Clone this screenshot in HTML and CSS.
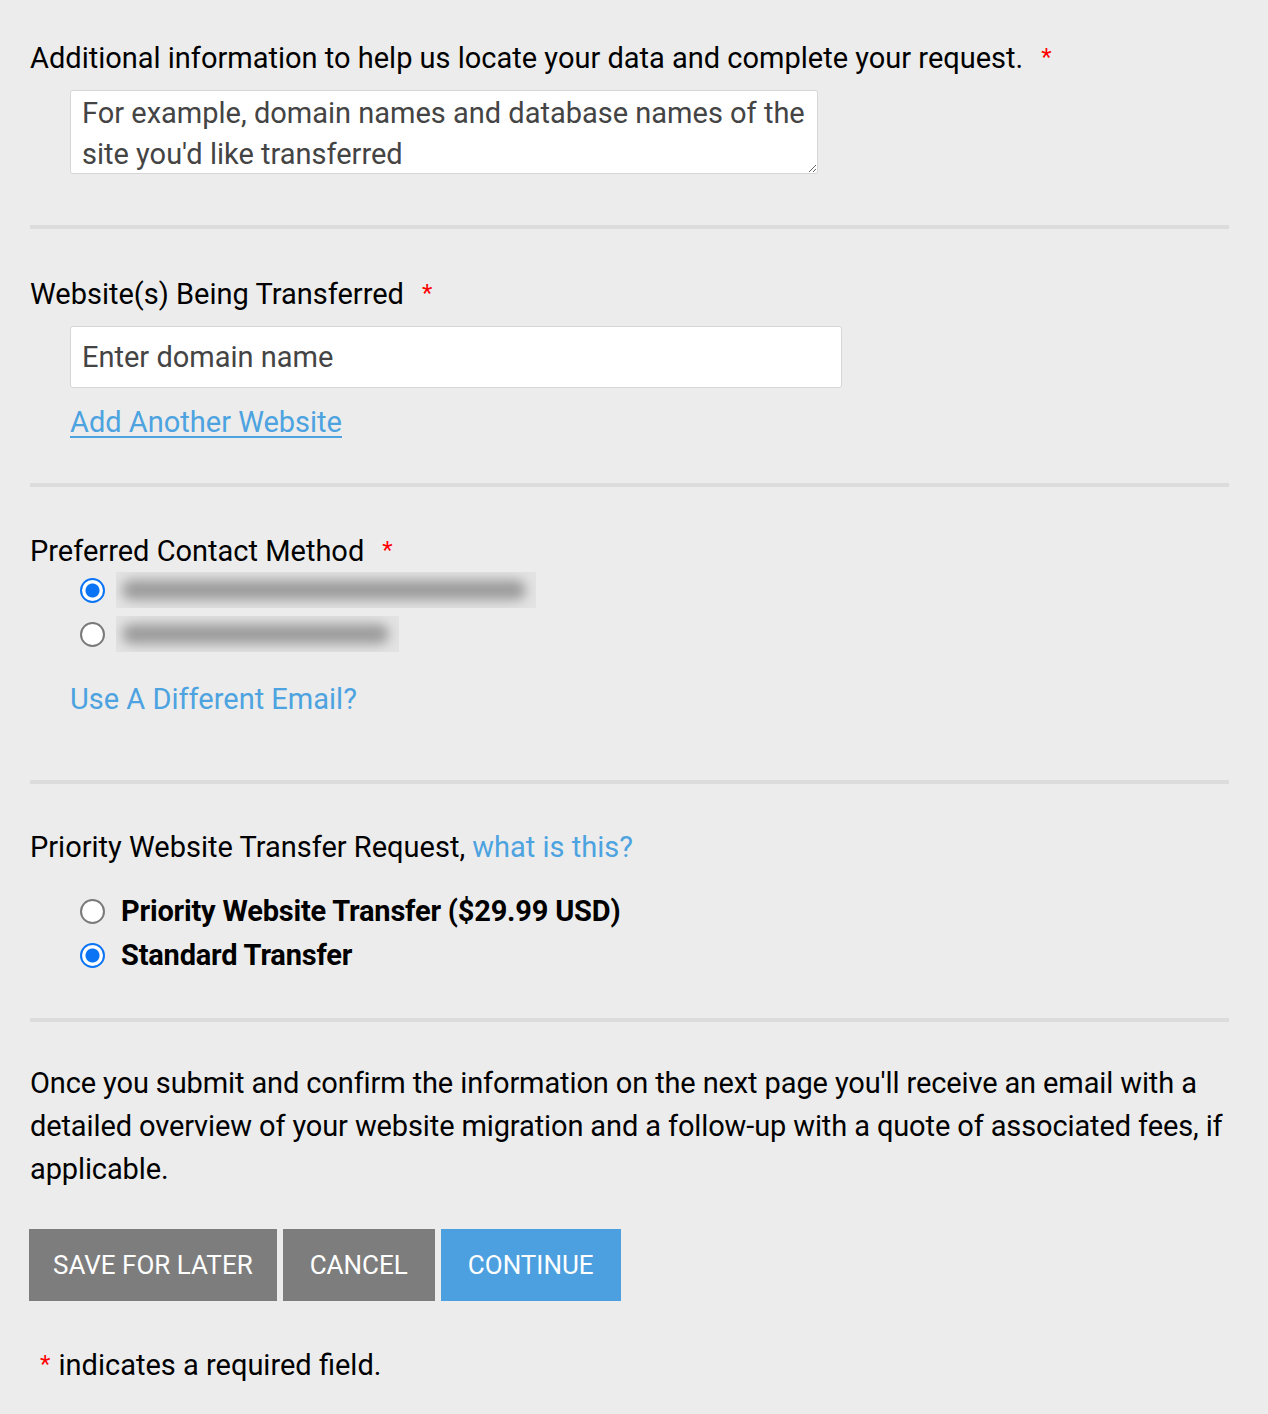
FILE: index.html
```html
<!DOCTYPE html>
<html lang="en">
<head>
<meta charset="utf-8">
<title>Website Transfer Request</title>
<link rel="stylesheet" href="styles.css">
</head>
<body>
<form class="form">
  <section class="section s1">
    <div class="label">Additional information to help us locate your data and complete your request.<span class="req">*</span></div>
    <div class="indent">
      <textarea class="textarea" placeholder="For example, domain names and database names of the site you'd like transferred"></textarea>
    </div>
  </section>

  <section class="section s2">
    <div class="label">Website(s) Being Transferred<span class="req">*</span></div>
    <div class="indent">
      <input class="input" type="text" placeholder="Enter domain name">
      <a class="link underline" href="#">Add Another Website</a>
    </div>
  </section>

  <section class="section s3">
    <div class="label">Preferred Contact Method<span class="req">*</span></div>
    <div class="options contact">
      <label class="option"><input class="radio" type="radio" name="contact" checked><span class="blurbox w1"><span class="blob"></span></span></label>
      <label class="option"><input class="radio" type="radio" name="contact"><span class="blurbox w2"><span class="blob"></span></span></label>
    </div>
    <div class="indent">
      <a class="link" href="#">Use A Different Email?</a>
    </div>
  </section>

  <section class="section s4">
    <div class="label">Priority Website Transfer Request, <a class="link" href="#">what is this?</a></div>
    <div class="options priority">
      <label class="option"><input class="radio" type="radio" name="priority"><span class="opt-text">Priority Website Transfer ($29.99 USD)</span></label>
      <label class="option"><input class="radio" type="radio" name="priority" checked><span class="opt-text">Standard Transfer</span></label>
    </div>
  </section>

  <section class="final">
    <p class="note">Once you submit and confirm the information on the next page you'll receive an email with a detailed overview of your website migration and a follow-up with a quote of associated fees, if applicable.</p>
    <div class="buttons">
      <button type="button" class="btn gray">SAVE FOR LATER</button>
      <button type="button" class="btn gray wide">CANCEL</button>
      <button type="button" class="btn blue wide">CONTINUE</button>
    </div>
    <p class="required-note"><span class="req-small">*</span> indicates a required field.</p>
  </section>
</form>
</body>
</html>
```

FILE: styles.css
```css
html, body {
  margin: 0;
  padding: 0;
  background: #ececec;
}
body {
  font-family: Roboto, "Liberation Sans", sans-serif;
  font-size: 29px;
  color: #000;
  -webkit-font-smoothing: antialiased;
}
.form {
  width: 1199px;
  padding: 38px 0 0 30px;
}
.section {
  border-bottom: 4px solid #dcdcdc;
}
.label {
  line-height: 40px;
  height: 40px;
  white-space: nowrap;
}
.req {
  display: inline-block;
  position: relative;
  top: 5px;
  color: #f00;
  font-size: 24px;
  vertical-align: top;
  line-height: 28px;
  margin-left: 18px;
}
.indent {
  padding-left: 40px;
}
.textarea {
  display: block;
  box-sizing: border-box;
  width: 748px;
  height: 84px;
  margin-top: 12px;
  padding: 2px 11px;
  border: 1px solid #d6d6d6;
  border-radius: 3px;
  background: #fff;
  font-family: inherit;
  font-size: 29px;
  line-height: 41px;
  color: #444;
  resize: vertical;
  overflow: hidden;
}
.textarea::placeholder, .input::placeholder {
  color: #444;
  opacity: 1;
}
.s1 {
  padding-bottom: 51px;
}
.s2 {
  padding-top: 45px;
  padding-bottom: 41px;
}
.input {
  display: block;
  box-sizing: border-box;
  width: 772px;
  height: 62px;
  margin-top: 12px;
  padding: 0 11px;
  border: 1px solid #d6d6d6;
  border-radius: 3px;
  background: #fff;
  font-family: inherit;
  font-size: 29px;
  color: #444;
}
.link {
  color: #4ca3e0;
  text-decoration: none;
}
.underline {
  display: inline-block;
  margin-top: 14px;
  line-height: 40px;
  text-decoration: underline;
  text-underline-offset: 4px;
  text-decoration-thickness: 2px;
}
.s3 {
  padding-top: 44px;
  padding-bottom: 61px;
}
.options {
  display: flex;
  flex-direction: column;
  padding-left: 50px;
}
.option {
  display: flex;
  align-items: center;
  gap: 11px;
  height: 43px;
}
.contact {
  margin-top: -3px;
  margin-bottom: 70px;
}
.contact .option {
  height: 44px;
}
.s3 .indent {
  margin-top: -47px;
  line-height: 40px;
}
.radio {
  appearance: none;
  -webkit-appearance: none;
  box-sizing: border-box;
  width: 25px;
  height: 25px;
  margin: 0;
  border: 2px solid #7a7a7a;
  border-radius: 50%;
  background: #fff;
  flex: none;
}
.radio:checked {
  border: 2px solid #0a74f5;
  background: radial-gradient(circle, #0a74f5 0 6.5px, #fff 7.5px);
}
.blurbox {
  display: block;
  height: 36px;
  background: #e3e3e3;
  position: relative;
  overflow: hidden;
}
.w1 { width: 420px; }
.w2 { width: 283px; }
.blob {
  position: absolute;
  left: 6px;
  right: 10px;
  top: 8px;
  height: 20px;
  border-radius: 10px;
  background: #9c9c9c;
  filter: blur(6px);
}
.s4 {
  padding-top: 43px;
  padding-bottom: 41px;
}
.priority {
  margin-top: 22px;
}
.priority .option {
  height: 44px;
  gap: 16px;
}
.opt-text {
  font-weight: 700;
  letter-spacing: -0.2px;
}
.final {
  padding-top: 40px;
}
.note {
  margin: 0;
  line-height: 43px;
  width: 1199px;
  letter-spacing: -0.12px;
}
.buttons {
  display: flex;
  gap: 6px;
  margin-top: 38px;
  margin-left: -1px;
}
.btn {
  height: 72px;
  padding: 0 24px;
  border: none;
  border-radius: 0;
  font-family: inherit;
  font-size: 26px;
  color: #fff;
  cursor: pointer;
}
.btn.wide {
  padding: 0 27px;
}
.gray { background: #7d7d7d; }
.blue { background: #4ca0e0; }
.required-note {
  margin: 44px 0 0 10px;
  line-height: 40px;
  padding-bottom: 30px;
}
.req-small {
  display: inline-block;
  position: relative;
  top: 5px;
  color: #f00;
  font-size: 24px;
  vertical-align: top;
  line-height: 28px;
  margin-right: 1px;
}
```
